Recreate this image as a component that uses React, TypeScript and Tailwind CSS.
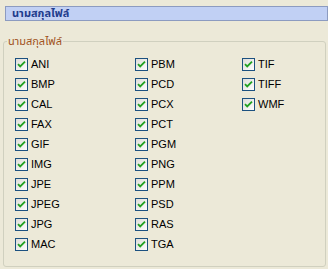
const columns: string[][] = [
  ["ANI", "BMP", "CAL", "FAX", "GIF", "IMG", "JPE", "JPEG", "JPG", "MAC"],
  ["PBM", "PCD", "PCX", "PCT", "PGM", "PNG", "PPM", "PSD", "RAS", "TGA"],
  ["TIF", "TIFF", "WMF"],
];

function CheckBox() {
  return (
    <svg width="13" height="13" viewBox="0 0 13 13" className="shrink-0">
      <defs>
        <linearGradient id="cbfill" x1="0" y1="0" x2="1" y2="1">
          <stop offset="0" stopColor="#dcdcd7" />
          <stop offset="1" stopColor="#ffffff" />
        </linearGradient>
      </defs>
      <rect x="0.5" y="0.5" width="12" height="12" fill="url(#cbfill)" stroke="#1c5180" />
      <path d="M3 6.2 L5.2 8.4 L10 3.6" fill="none" stroke="#21a121" strokeWidth="1.8" />
    </svg>
  );
}

function Item({ label }: { label: string }) {
  return (
    <div className="flex h-[20px] items-center gap-[3px]">
      <CheckBox />
      <span className="text-[11px] leading-[13px] text-[#000000]">{label}</span>
    </div>
  );
}

export default function App() {
  return (
    <div
      className="w-[328px] h-[269px] overflow-hidden bg-[#ece9d8] pt-[6px]"
      style={{ fontFamily: 'Tahoma, "Liberation Sans", "Noto Sans Thai", "Noto Sans", sans-serif' }}
    >
      <div className="ml-[5px] w-[323px] h-[15px] border border-[#8c9bc0] bg-[#c1d0f4] pl-[6px]">
        <span className="block text-[11px] leading-[13px] font-bold text-[#1e3c8c]">นามสกุลไฟล์</span>
      </div>

      <fieldset className="mt-[13px] ml-[3px] w-[323px] h-[233px] rounded-[3px] border border-[#d0d0bf]">
        <legend className="ml-[3px] px-[1px] text-[11px] leading-[14px] text-[#a0521c]">นามสกุลไฟล์</legend>
        <div className="flex pt-[6px] pl-[11px]">
          <div className="flex w-[120px] flex-col">
            {columns[0].map((l) => (
              <Item key={l} label={l} />
            ))}
          </div>
          <div className="flex w-[107px] flex-col">
            {columns[1].map((l) => (
              <Item key={l} label={l} />
            ))}
          </div>
          <div className="flex flex-col">
            {columns[2].map((l) => (
              <Item key={l} label={l} />
            ))}
          </div>
        </div>
      </fieldset>
    </div>
  );
}
